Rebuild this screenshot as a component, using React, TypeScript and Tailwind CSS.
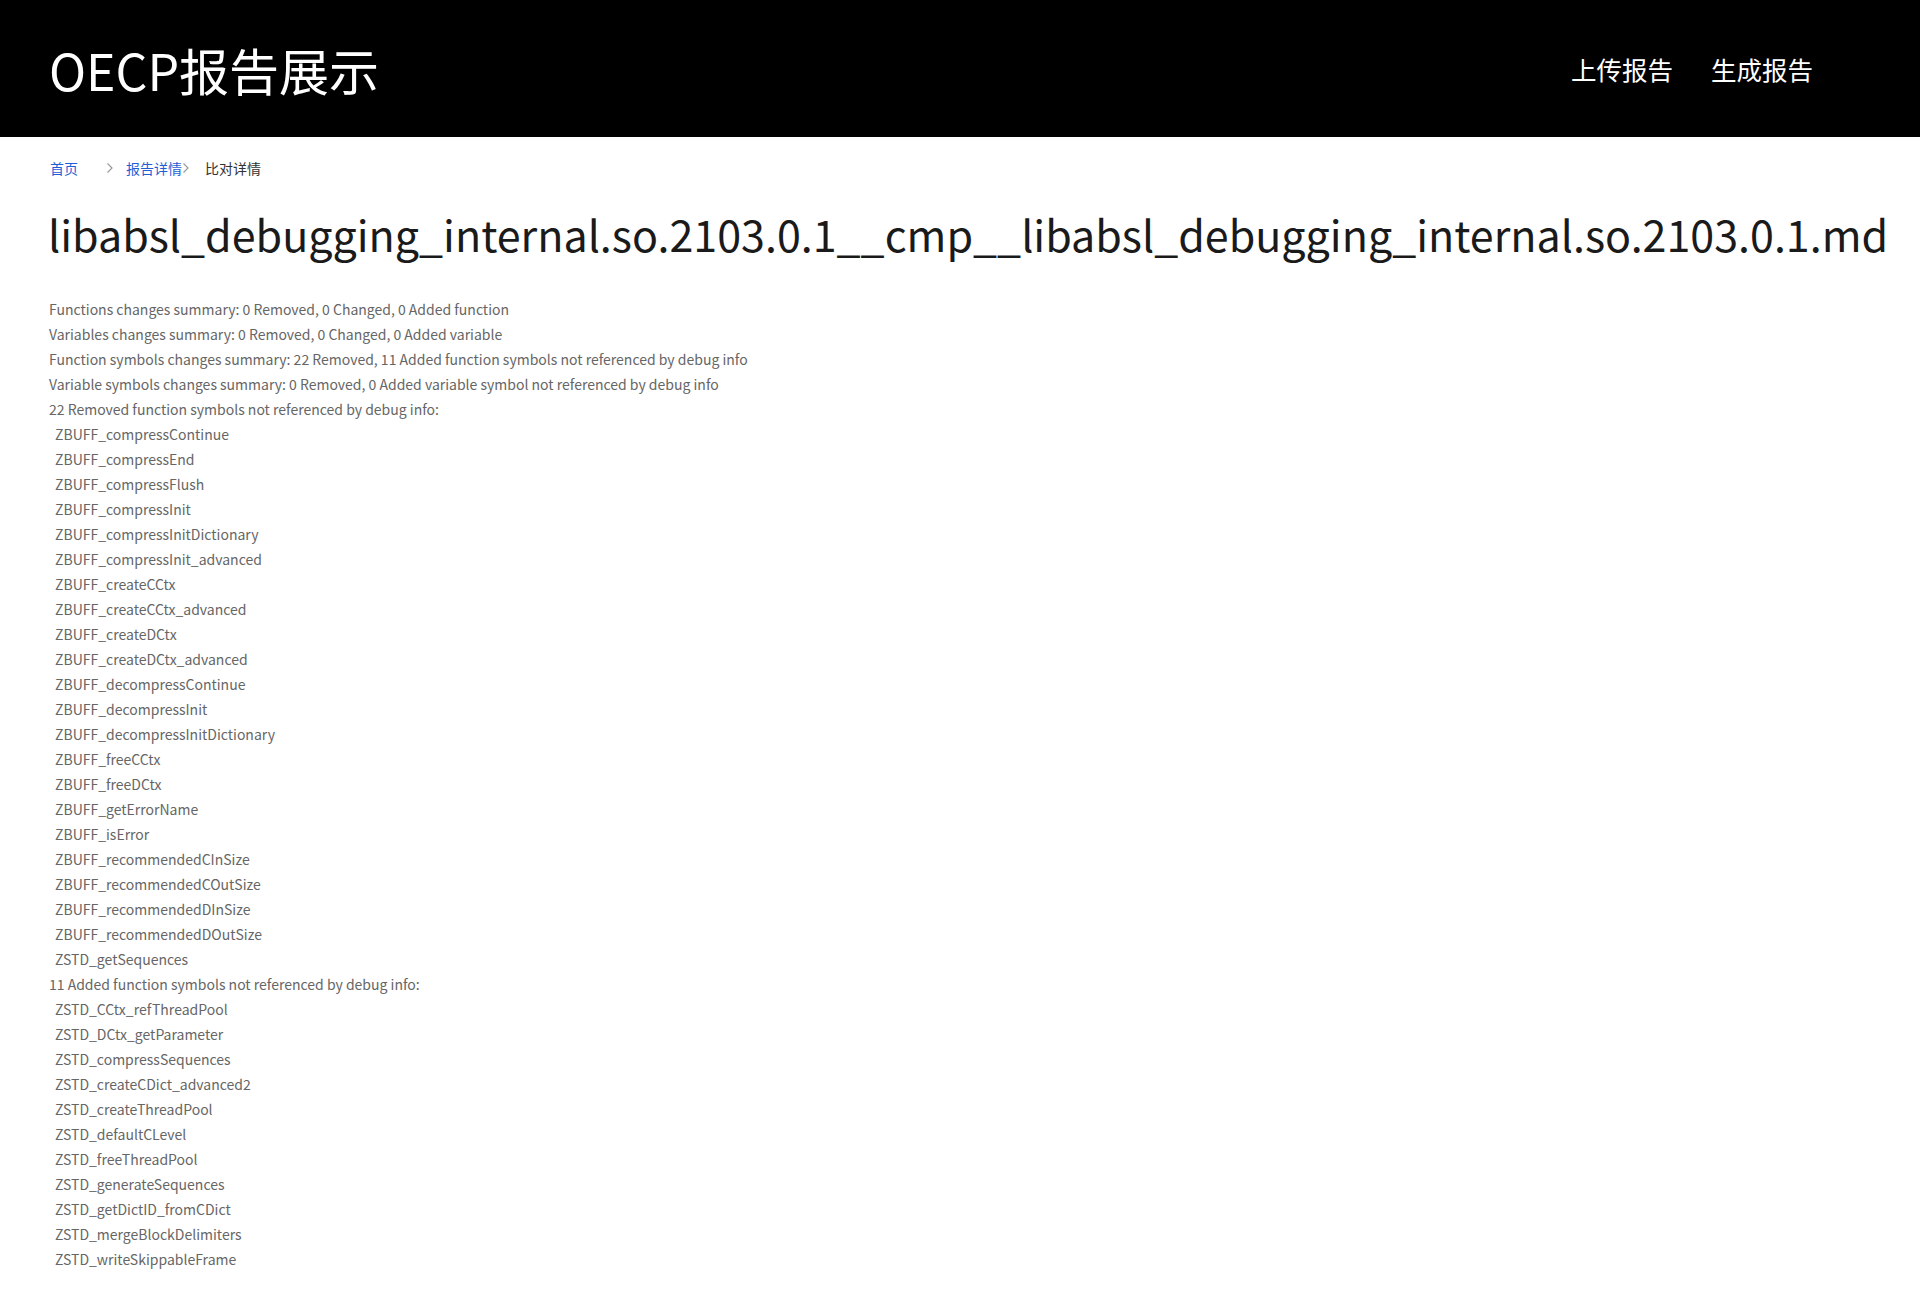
import React from "react";

const summary = [
  "Functions changes summary: 0 Removed, 0 Changed, 0 Added function",
  "Variables changes summary: 0 Removed, 0 Changed, 0 Added variable",
  "Function symbols changes summary: 22 Removed, 11 Added function symbols not referenced by debug info",
  "Variable symbols changes summary: 0 Removed, 0 Added variable symbol not referenced by debug info",
];

const removed = [
  "ZBUFF_compressContinue",
  "ZBUFF_compressEnd",
  "ZBUFF_compressFlush",
  "ZBUFF_compressInit",
  "ZBUFF_compressInitDictionary",
  "ZBUFF_compressInit_advanced",
  "ZBUFF_createCCtx",
  "ZBUFF_createCCtx_advanced",
  "ZBUFF_createDCtx",
  "ZBUFF_createDCtx_advanced",
  "ZBUFF_decompressContinue",
  "ZBUFF_decompressInit",
  "ZBUFF_decompressInitDictionary",
  "ZBUFF_freeCCtx",
  "ZBUFF_freeDCtx",
  "ZBUFF_getErrorName",
  "ZBUFF_isError",
  "ZBUFF_recommendedCInSize",
  "ZBUFF_recommendedCOutSize",
  "ZBUFF_recommendedDInSize",
  "ZBUFF_recommendedDOutSize",
  "ZSTD_getSequences",
];

const added = [
  "ZSTD_CCtx_refThreadPool",
  "ZSTD_DCtx_getParameter",
  "ZSTD_compressSequences",
  "ZSTD_createCDict_advanced2",
  "ZSTD_createThreadPool",
  "ZSTD_defaultCLevel",
  "ZSTD_freeThreadPool",
  "ZSTD_generateSequences",
  "ZSTD_getDictID_fromCDict",
  "ZSTD_mergeBlockDelimiters",
  "ZSTD_writeSkippableFrame",
];

const font = { fontFamily: '"Noto Sans CJK SC", "Noto Sans", sans-serif' };

function Chevron() {
  return (
    <svg width="8" height="12" viewBox="0 0 8 12" className="text-[#9a9a9a]">
      <path d="M1.5 1.5 L6 6 L1.5 10.5" fill="none" stroke="currentColor" strokeWidth="1.2" />
    </svg>
  );
}

export default function App() {
  return (
    <div className="min-h-[1310px] bg-white" style={font}>
      <header className="flex h-[137px] items-center justify-between bg-black pl-[49px] pr-[107px]">
        <h1 className="text-[50px] font-normal leading-none text-white">OECP报告展示</h1>
        <nav className="flex items-center gap-[38px] pt-[2px] text-[25.5px] text-white">
          <span>上传报告</span>
          <span>生成报告</span>
        </nav>
      </header>
      <div className="flex items-center pl-[50px] pt-[20px] text-[14px] leading-[22px]">
        <span className="text-[#1f5fd6]">首页</span>
        <span className="ml-[28px] mr-[12px] flex items-center">
          <Chevron />
        </span>
        <span className="text-[#1f5fd6]">报告详情</span>
        <span className="mr-[15px] flex items-center">
          <Chevron />
        </span>
        <span className="text-[#333]">比对详情</span>
      </div>
      <h2 className="mt-[28px] pl-[48px] text-[43px] font-normal leading-[52px] text-[#1a1a1a]">
        libabsl_debugging_internal.so.2103.0.1__cmp__libabsl_debugging_internal.so.2103.0.1.md
      </h2>
      <div className="mt-[38px] pl-[49px] text-[14px] leading-[25px] text-[#666]">
        {summary.map((s) => (
          <p key={s}>{s}</p>
        ))}
        <p>22 Removed function symbols not referenced by debug info:</p>
        {removed.map((s) => (
          <p key={s} className="pl-[6px]">{s}</p>
        ))}
        <p>11 Added function symbols not referenced by debug info:</p>
        {added.map((s) => (
          <p key={s} className="pl-[6px]">{s}</p>
        ))}
      </div>
    </div>
  );
}
